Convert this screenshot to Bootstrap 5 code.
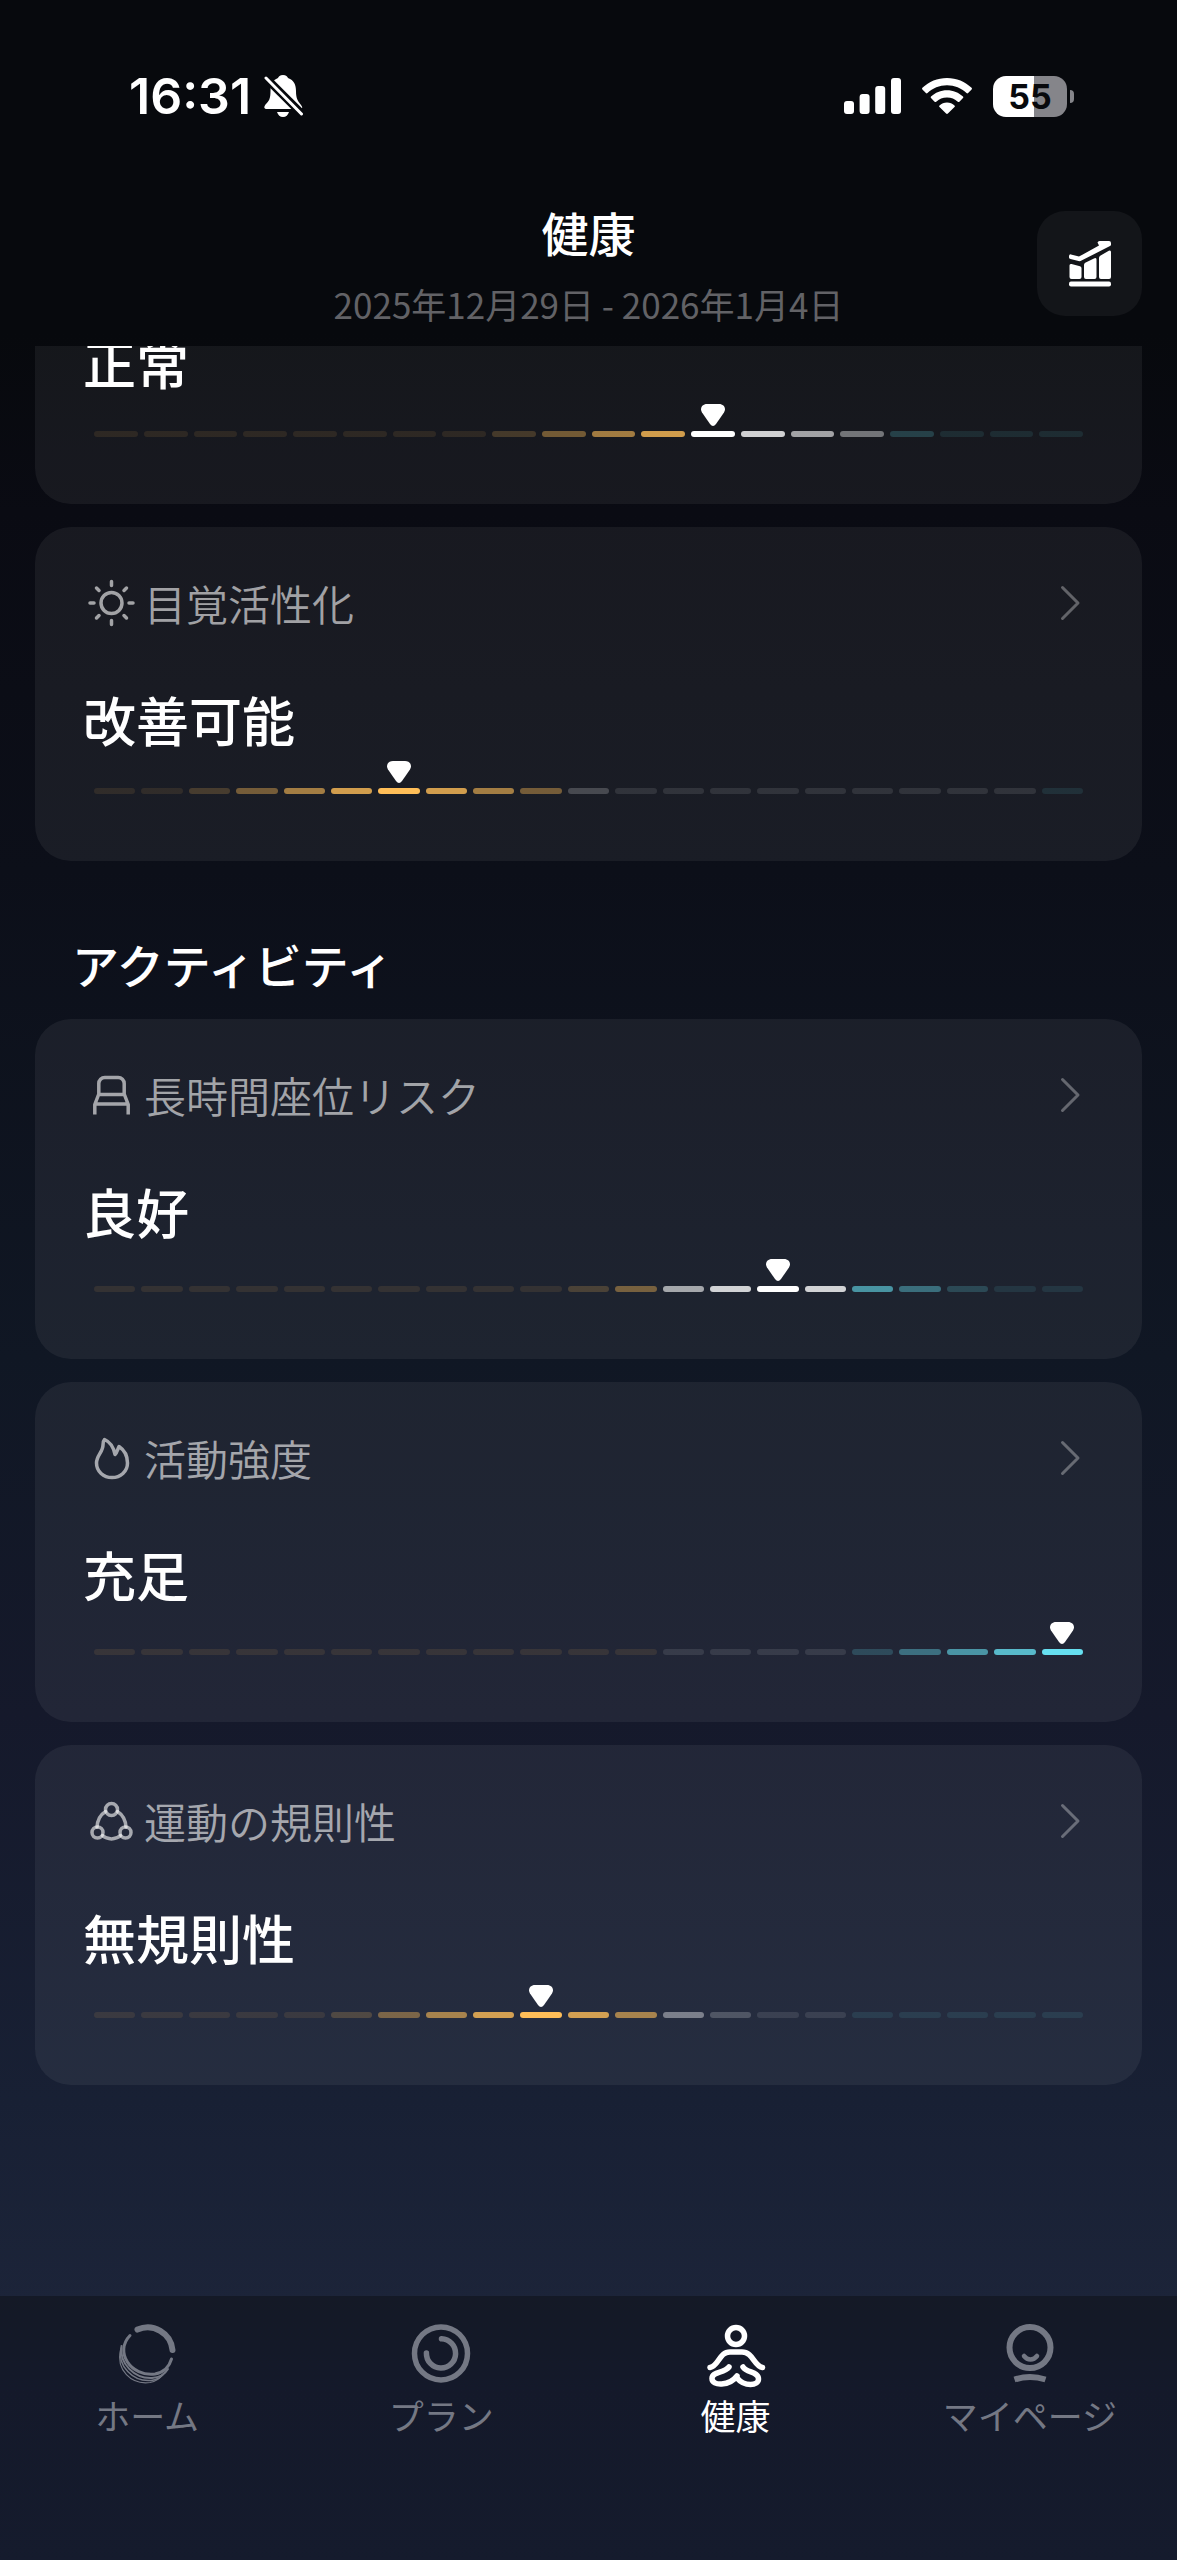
<!DOCTYPE html>
<html lang="ja">
<head>
<meta charset="utf-8">
<meta name="viewport" content="width=device-width, initial-scale=1">
<title>健康</title>
<link href="https://cdn.jsdelivr.net/npm/bootstrap@5.3.0/dist/css/bootstrap.min.css" rel="stylesheet">
<style>
  body {
    font-family: "Noto Sans CJK JP", sans-serif;
    color: #fff;
    background: linear-gradient(#07090d 0, #07090d 13%, #0a0b13 20%, #0c0f19 34%, #101724 53%, #15192b 67%, #182034 82%, #1c2439 90%);
  }
  svg { display: block; flex: none; }
  .line-icon { fill: none; stroke: currentColor; stroke-width: 3.5; stroke-linecap: round; stroke-linejoin: round; }

  /* status bar */
  .status { padding: 66px 103px 0 129px; height: 126px; }
  .clock { font: 600 50px/60px Inter, sans-serif; margin-right: 13px; }
  .wifi { margin: 0 21px; }
  .battery-level {
    width: 74px; height: 41px; border-radius: 13px;
    background: linear-gradient(90deg, #fff 55%, #85858a 55%);
    color: #07090d; font: 700 34px/41px Inter, sans-serif;
  }
  .battery-tip { width: 4px; height: 13px; border-radius: 0 6px 6px 0; background: #85858a; margin-left: 3px; }

  /* title row */
  .title-row { padding: 72px 35px 17px; }
  .title-side { flex: 1 1 0; }
  .page-title { font-size: 47px; line-height: 68px; font-weight: 500; margin-bottom: 13px; }
  .period { font-size: 35px; line-height: 50px; font-weight: 400; color: #626266; }
  .chart-btn { width: 105px; height: 105px; border-radius: 28px; background: #131519; color: #fff; }
  .chart-btn:hover { background: #1d1f24; }

  /* metric cards */
  .metrics { padding: 0 35px; }
  .metric { border-radius: 36px; background: rgba(255,255,255,.06); padding: 46px 59px 67px 52px; margin-bottom: 23px; color: #fff; text-decoration: none; }
  .metric-clipped { border-radius: 0 0 36px 36px; padding-top: 0; overflow: hidden; }
  .metric-clipped .metric-value { margin-top: -14px; }
  .metric-head { height: 60px; margin-bottom: 56px; gap: 9px; color: rgba(255,255,255,.6); }
  .metric-name { font-size: 42px; line-height: 60px; font-weight: 350; }
  .metric-value { font-size: 53px; line-height: 60px; font-weight: 500; margin: 0 0 39px -4px; }
  .roomy .metric-value { margin-bottom: 45px; }
  .chevron { color: rgba(255,255,255,.32); stroke-width: 3; }
  .section-title { font-size: 47px; line-height: 70px; font-weight: 500; margin: 68px 0 20px 37px; }

  .scale { gap: 6px; margin-left: 7px; }
  .scale span { flex: 1 1 0; height: 6px; border-radius: 3px; position: relative; }
  .tone-low { background: #ffbe58; }
  .tone-mid { background: #fff; }
  .tone-high { background: #66dff0; }
  .scale svg { position: absolute; bottom: 11px; left: 50%; margin-left: -12px; }

  /* bottom tabs */
  .tabs { background: linear-gradient(#141926, #14192a 35%, #151b2d); padding: 28px 0 125px; }
  .tabs a { flex: 1 1 0; gap: 7px; color: #747884; font-size: 35px; line-height: 40px; text-decoration: none; }
  .tabs a.active { color: #fff; }
</style>
</head>
<body class="d-flex flex-column min-vh-100">

<header>
  <div class="status d-flex align-items-center justify-content-between">
    <div class="d-flex align-items-center">
      <span class="clock">16:31</span>
      <svg width="40" height="42" viewBox="0 0 40 42" aria-hidden="true">
        <path fill="#fff" d="M19 0c3 0 4.500 1.500 5 3c6 2 8 7 8 13c0 8 2 10 5 14c2 2.500 1.500 4-1 4H3c-3 0-3.500-2-1.500-4.500C5 26 6.500 24 6.500 16c0-6 2-11 7.500-13c.5-1.500 2-3 5-3zM13 37h12c-1 3-3 5-6 5s-5-2-6-5z"/>
        <path stroke="#07090d" stroke-width="8" d="M0 1l39 39"/>
        <path stroke="#fff" stroke-width="3" stroke-linecap="round" d="M2 3l35.500 36"/>
      </svg>
    </div>
    <div class="d-flex align-items-center">
      <svg width="57" height="36" viewBox="0 0 57 36" fill="#fff" aria-hidden="true">
        <rect y="23" width="10" height="13" rx="3"/><rect x="15.600" y="16" width="10" height="20" rx="3"/>
        <rect x="31.200" y="8" width="10" height="28" rx="3"/><rect x="47" width="10" height="36" rx="3"/>
      </svg>
      <svg class="wifi" width="50" height="36" viewBox="0 0 50 36" fill="#fff" aria-hidden="true">
        <path d="M25 0C15.500 0 6.800 3.700.4 9.800c-.5.500-.5 1.100 0 1.600l3.500 3.600c.5.500 1.100.5 1.600 0C10.600 10.200 17.500 7.300 25 7.300s14.400 2.900 19.500 7.700c.5.500 1.100.5 1.600 0l3.500-3.600c.5-.5.5-1.100 0-1.600C43.200 3.700 34.500 0 25 0z"/>
        <path d="M25 12.200c-6.200 0-11.800 2.400-16 6.300-.5.500-.5 1.100 0 1.600l3.600 3.600c.5.500 1.100.5 1.600 0 2.800-2.600 6.600-4.200 10.800-4.200s8 1.600 10.800 4.200c.5.500 1.100.5 1.600 0l3.600-3.600c.5-.5.5-1.100 0-1.600-4.200-3.900-9.800-6.300-16-6.300z"/>
        <path d="M25 24.500c-2.900 0-5.500 1.100-7.500 2.900-.5.500-.5 1.100 0 1.600l6.600 6.600c.5.500 1.300.5 1.800 0l6.600-6.600c.5-.5.5-1.100 0-1.600-2-1.800-4.600-2.900-7.500-2.900z"/>
      </svg>
      <span class="battery-level text-center">55</span>
      <span class="battery-tip"></span>
    </div>
  </div>

  <div class="title-row d-flex align-items-center">
    <div class="title-side"></div>
    <div class="text-center">
      <h1 class="page-title">健康</h1>
      <div class="period">2025年12月29日 - 2026年1月4日</div>
    </div>
    <div class="title-side d-flex justify-content-end">
      <button type="button" class="chart-btn btn border-0 p-0 d-flex align-items-center justify-content-center" aria-label="レポート">
        <svg width="42" height="46" viewBox="0 0 42 46" fill="currentColor" aria-hidden="true">
          <path d="M.5 24.500q0-2 2-1.500l8.500 2.200q1.500.4 1.500 2V36q0 2-2 2h-8q-2 0-2-2zM15 24q0-1.500 1.200-2.200l9.300-4.600q2-.9 2 1.300V36q0 2-2 2H17q-2 0-2-2zM30 17q0-1.500 1.200-2.300l8.600-4.900q2.200-1 2.200 1.200v25q0 2-2 2h-8q-2 0-2-2z"/>
          <rect y="40.500" width="42" height="5" rx="2"/>
          <path d="M28.500 1.500Q29 0 30.500 0H40q2 0 2 2v1.500q0 1-1 1.500L12.500 19.600q-1.500.8-3 .4L1.500 18Q0 17.500 0 16.500V15q.2-2 2-1.600l8 2.200L30 4.500z"/>
        </svg>
      </button>
    </div>
  </div>
</header>

<main class="metrics flex-grow-1">
  <section class="metric metric-clipped">
    <div class="metric-value">正常</div>
    <div class="scale d-flex" data-count="20" data-low="12" data-mid="16" data-at="12"></div>
  </section>

  <a href="#wake" class="metric d-block">
    <div class="metric-head d-flex align-items-center">
      <svg class="line-icon" width="48" height="48" viewBox="0 0 48 48" aria-hidden="true"><circle cx="24.500" cy="24" r="10.500"/><path d="M24.500 2.500v4M24.500 41.500v4M3 24h4M42 24h4M9.500 9l2.500 2.500M37 36.500l2.500 2.500M39.500 9L37 11.500M12 36.500L9.500 39"/></svg>
      <span class="metric-name me-auto">目覚活性化</span>
      <svg class="line-icon chevron" width="24" height="36" viewBox="0 0 24 36" aria-hidden="true"><path d="M3.500 2.500L19 18 3.500 33.500"/></svg>
    </div>
    <div class="metric-value">改善可能</div>
    <div class="scale d-flex" data-count="21" data-low="10" data-mid="20" data-at="6"></div>
  </a>

  <h2 class="section-title">アクティビティ</h2>

  <a href="#sitting" class="metric roomy d-block">
    <div class="metric-head d-flex align-items-center">
      <svg class="line-icon" width="48" height="48" viewBox="0 0 48 48" aria-hidden="true"><path stroke-linecap="butt" d="M7.800 43.500V33.500L11.800 23V12.500a6 6 0 0 1 6-6h13.400a6 6 0 0 1 6 6V23l4 10.500v10M12 23.500h25M8 33h33"/></svg>
      <span class="metric-name me-auto">長時間座位リスク</span>
      <svg class="line-icon chevron" width="24" height="36" viewBox="0 0 24 36" aria-hidden="true"><path d="M3.500 2.500L19 18 3.500 33.500"/></svg>
    </div>
    <div class="metric-value">良好</div>
    <div class="scale d-flex" data-count="21" data-low="12" data-mid="16" data-at="14"></div>
  </a>

  <a href="#intensity" class="metric roomy d-block">
    <div class="metric-head d-flex align-items-center">
      <svg class="line-icon" width="48" height="48" viewBox="0 0 48 48" aria-hidden="true"><path d="M17.500 5.500C23.500 8 26.500 13 28 20.500c2-1.500 2.500-5 4-8 6 4 8.500 10 8.500 16.500C40.500 37.500 33.500 43.500 25 43.500S9.500 37.500 9.500 29c0-7.500 6.500-11 6.500-18 0-2 0-4 1.500-5.500z"/></svg>
      <span class="metric-name me-auto">活動強度</span>
      <svg class="line-icon chevron" width="24" height="36" viewBox="0 0 24 36" aria-hidden="true"><path d="M3.500 2.500L19 18 3.500 33.500"/></svg>
    </div>
    <div class="metric-value">充足</div>
    <div class="scale d-flex" data-count="21" data-low="12" data-mid="16" data-at="20"></div>
  </a>

  <a href="#regularity" class="metric roomy d-block">
    <div class="metric-head d-flex align-items-center">
      <svg class="line-icon" width="48" height="48" viewBox="0 0 48 48" aria-hidden="true"><circle cx="24.500" cy="12.500" r="6"/><circle cx="10.500" cy="35.500" r="5.500"/><circle cx="38.500" cy="35.500" r="5.500"/><path d="M18.500 14.500C13 18 10.500 23 10 30M30.500 14.500C36 18 38.500 23 39 30M15.500 38.500c5 4.500 13 4.500 18 0"/></svg>
      <span class="metric-name me-auto">運動の規則性</span>
      <svg class="line-icon chevron" width="24" height="36" viewBox="0 0 24 36" aria-hidden="true"><path d="M3.500 2.500L19 18 3.500 33.500"/></svg>
    </div>
    <div class="metric-value">無規則性</div>
    <div class="scale d-flex" data-count="21" data-low="12" data-mid="16" data-at="9"></div>
  </a>
</main>

<nav class="tabs d-flex">
  <a href="#home" class="d-flex flex-column align-items-center">
    <svg class="line-icon" width="64" height="64" viewBox="0 0 64 64" aria-hidden="true">
      <path stroke-width="6" d="M22.500 5.600A25 25 0 0 1 57.500 26"/>
      <path stroke-width="3" d="M15 11.500C-1 28 16 53 40 50c9-1.500 14.500-8 16.500-15"/>
      <path stroke-width="2" d="M6.500 22C4 40 20 55 37 54c7-.5 13-4 16-9"/>
      <path stroke-width="1.500" d="M6 24C2 42 18 58 36 56.500c7-.5 11-4 14-8"/>
      <path stroke-width="1.200" d="M5.500 26C1 46 16 61 35 58.500c6-1 10-4 13-8"/>
    </svg>
    <span>ホーム</span>
  </a>
  <a href="#plan" class="d-flex flex-column align-items-center">
    <svg class="line-icon" width="64" height="64" viewBox="0 0 64 64" aria-hidden="true"><g stroke-width="5.500"><circle cx="32" cy="29.400" r="26.500"/><path d="M32.500 14.800A14.600 14.600 0 1 1 17.400 29"/></g></svg>
    <span>プラン</span>
  </a>
  <a href="#health" class="active d-flex flex-column align-items-center" aria-current="page">
    <svg class="line-icon" width="64" height="64" viewBox="0 0 64 64" aria-hidden="true"><g stroke-width="5.500"><circle cx="32" cy="12" r="8.500"/><path d="M6 43.500C15 42 15 28 26 28h12c11 0 12 14 20.500 15.500"/><path d="M25 43c-5 6.500-17 4-17 11.500 0 8 17.500 7.500 25-2.500"/><path d="M39 43c4 6 15.500 4.500 15.500 12 0 7-14 8-21.500-1"/></g></svg>
    <span>健康</span>
  </a>
  <a href="#mypage" class="d-flex flex-column align-items-center">
    <svg class="line-icon" width="64" height="64" viewBox="0 0 64 64" aria-hidden="true"><circle cx="32" cy="23.600" r="20.500" stroke-width="6"/><path stroke-width="4.500" d="M26 32c3.500 4.500 9.500 4.500 13 0"/><path stroke-width="6" stroke-linecap="butt" d="M16.500 55.500q15.500-5 31 0"/></svg>
    <span>マイページ</span>
  </a>
</nav>

<script>
  // Each scale fades away from the current position: 100, 80, 60, 40, 20, then 10 percent.
  const fade = [1, .8, .6, .4, .2];
  const pointer = '<svg width="24" height="22" viewBox="0 0 24 22"><path fill="#fff" d="M6 0h12c5 0 7.500 4.500 5 8.500l-8 11.500q-3 4-6 0L1 8.500C-1.500 4.500 1 0 6 0z"/></svg>';
  document.querySelectorAll('.scale').forEach(scale => {
    const { count, low, mid, at } = scale.dataset;
    for (let i = 0; i < count; i++) {
      const part = document.createElement('span');
      part.className = i < low ? 'tone-low' : i < mid ? 'tone-mid' : 'tone-high';
      part.style.opacity = fade[Math.abs(i - at)] ?? .1;
      if (i == at) part.innerHTML = pointer;
      scale.append(part);
    }
  });
</script>
<script src="https://cdn.jsdelivr.net/npm/bootstrap@5.3.0/dist/js/bootstrap.bundle.min.js"></script>
</body>
</html>
